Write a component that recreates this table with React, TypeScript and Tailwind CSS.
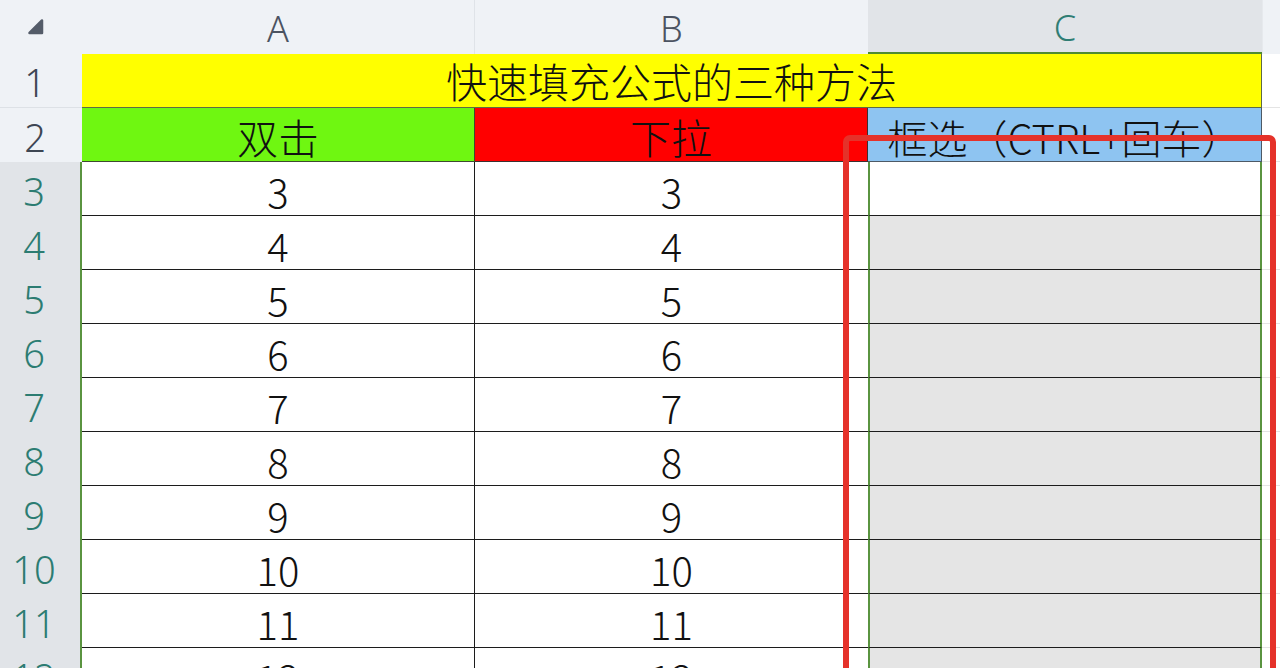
import React from 'react';

const rows = [3, 4, 5, 6, 7, 8, 9, 10, 11, 12];

const App = () => {
  return (
    <div className="relative h-[668px] w-[1280px] overflow-hidden bg-white">
      <div className="grid grid-cols-[82px_393px_393px_394px_18px] auto-rows-[54px]">
        {/* column headers */}
        <div className="relative bg-[#eff2f6]">
          <svg className="absolute left-[27px] top-[18px]" width="18" height="18" viewBox="0 0 18 18">
            <path d="M15 2.5 L15 15 L2.5 15 Z" fill="#545c69" stroke="#545c69" strokeWidth="2.5" strokeLinejoin="round" />
          </svg>
        </div>
        <div className="flex items-center justify-center border-r border-[#dfe3e8] bg-[#eff2f6] pt-1 font-['Noto_Sans',sans-serif] text-[36px] font-light text-[#4b5361]">A</div>
        <div className="flex items-center justify-center bg-[#eff2f6] pt-1 font-['Noto_Sans',sans-serif] text-[36px] font-light text-[#4b5361]">B</div>
        <div className="flex items-center justify-center border-b-2 border-[#4f8b30] bg-[#e1e4e8] pt-1 font-['Noto_Sans',sans-serif] text-[36px] font-light text-[#2f7d74]">C</div>
        <div className="border-l border-[#e6e9ed] bg-[#eff2f6]"></div>

        {/* row 1 */}
        <div className="flex items-center justify-center border-b border-[#dde1e6] bg-[#eff2f6] pr-3 pt-1 font-['Noto_Sans',sans-serif] text-[38px] font-light text-[#3e4653]">1</div>
        <div className="col-span-3 flex items-center justify-center border-b border-r border-[#5d6b45] bg-[#ffff00] font-['Noto_Sans_CJK_SC',sans-serif] text-[41px] font-light leading-none text-[#111]">
          快速填充公式的三种方法
        </div>
        <div className="border-b border-[#e4e4e4] bg-white"></div>

        {/* row 2 */}
        <div className="flex items-center justify-center bg-[#eff2f6] pr-3 pt-1 font-['Noto_Sans',sans-serif] text-[38px] font-light text-[#3e4653]">2</div>
        <div className="flex items-center justify-center border-b border-r border-[#3d4a30] bg-[#6ff711] pt-1 font-['Noto_Sans_CJK_SC',sans-serif] text-[41px] font-light leading-none text-[#111]">双击</div>
        <div className="flex items-center justify-center border-b border-r border-[#3d3030] bg-[#ff0000] pt-1 font-['Noto_Sans_CJK_SC',sans-serif] text-[41px] font-light leading-none text-[#111]">下拉</div>
        <div className="flex items-center justify-center whitespace-nowrap border-b border-r border-[#4d5a66] bg-[#8ec4f1] pt-1 font-['Noto_Sans_CJK_SC',sans-serif] text-[40px] font-light leading-none text-[#111]">
          框选（CTRL+回车）
        </div>
        <div className="border-b border-[#e4e4e4] bg-white"></div>

        {/* data rows */}
        {rows.map((n) => (
          <React.Fragment key={n}>
            <div className="flex items-center justify-center border-r-2 border-[#5a9440] bg-[#e1e4e8] pr-3 pt-1 font-['Noto_Sans',sans-serif] text-[38px] font-light text-[#2c7c72]">
              {n}
            </div>
            <div className="flex items-center justify-center border-b border-r border-[#1c1c1c] bg-white pt-1 font-['Noto_Sans_CJK_SC',sans-serif] text-[40px] font-light leading-none text-[#111]">
              {n}
            </div>
            <div className="flex items-center justify-center border-b border-[#1c1c1c] bg-white pt-1 font-['Noto_Sans_CJK_SC',sans-serif] text-[40px] font-light leading-none text-[#111]">
              {n}
            </div>
            <div
              className={
                n === 3
                  ? 'border-x-2 border-b border-x-[#5a9440] border-b-[#1c1c1c] bg-white'
                  : 'border-x-2 border-b border-x-[#5a9440] border-b-[#1c1c1c] bg-[#e5e5e5]'
              }
            ></div>
            <div className="border-b border-[#e4e4e4] bg-white"></div>
          </React.Fragment>
        ))}
      </div>

      {/* red annotation box */}
      <div className="absolute left-[843px] top-[135px] h-[600px] w-[433px] rounded-[7px] border-[6px] border-[#e5322a]"></div>
    </div>
  );
};

export default App;
